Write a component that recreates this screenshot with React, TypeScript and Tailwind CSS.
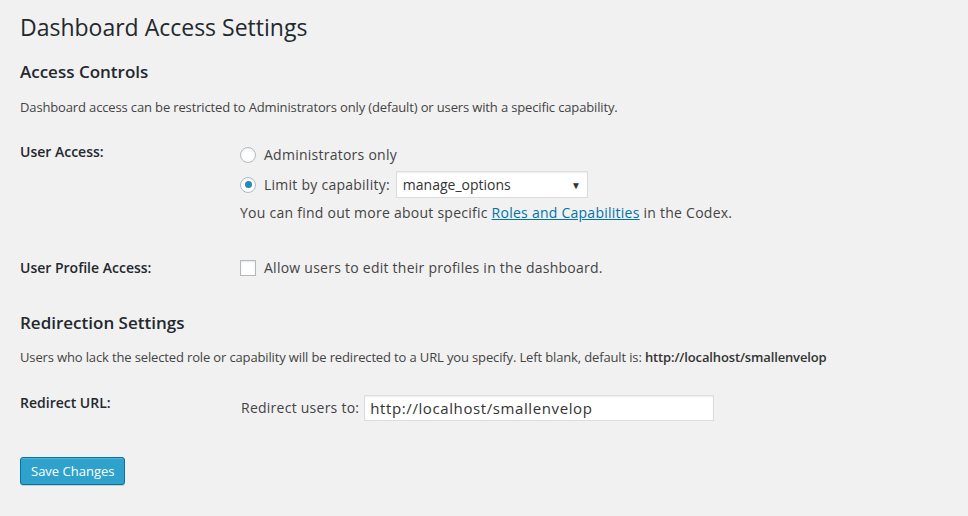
import React from "react";

const font = "font-['Open_Sans','Noto_Sans',sans-serif]";

function Radio({ checked }: { checked?: boolean }) {
  return (
    <span className="inline-flex h-4 w-4 shrink-0 items-center justify-center rounded-full border border-[#b4b9be] bg-white shadow-[inset_0_1px_2px_rgba(0,0,0,0.07)]">
      {checked && <span className="h-[7px] w-[7px] rounded-full bg-[#1e8cbe]" />}
    </span>
  );
}

function Row({ label, contentPad, children }: { label: string; contentPad: string; children: React.ReactNode }) {
  return (
    <div className="flex items-start">
      <div className="w-[220px] shrink-0 text-[14px] leading-[18px] font-[550] text-[#23282d]">{label}</div>
      <div className={`text-[14px] leading-[18px] tracking-[0.25px] text-[#444] ${contentPad}`}>{children}</div>
    </div>
  );
}

export default function App() {
  return (
    <div className={`min-h-[516px] w-full bg-[#f1f1f1] px-5 pt-[13px] pb-8 text-[#444] ${font}`}>
      <h1 className="text-[23px] leading-[29px] font-normal text-[#23282d]">Dashboard Access Settings</h1>

      <h2 className="mt-[19px] text-[17px] leading-[22px] font-semibold text-[#23282d]">Access Controls</h2>
      <p className="mt-[14px] text-[13px] leading-[20px] tracking-[-0.14px]">
        Dashboard access can be restricted to Administrators only (default) or users with a specific capability.
      </p>

      <div className="mt-[26px]">
        <Row label="User Access:" contentPad="pt-[3px]">
          <div className="flex flex-col">
            <label className="flex h-[18px] items-center gap-2">
              <Radio />
              <span>Administrators only</span>
            </label>
            <label className="mt-[7px] flex h-[27px] items-center gap-2">
              <Radio checked />
              <span>Limit by capability:</span>
              <span className="ml-[-2px] flex h-[27px] w-[192px] items-center justify-between border border-[#ddd] bg-white pl-[6px] pr-[6px] tracking-normal text-[#333] shadow-[inset_0_1px_2px_rgba(0,0,0,0.07)]">
                <span>manage_options</span>
                <span className="text-[10px]">▼</span>
              </span>
            </label>
            <p className="mt-[6px]">
              You can find out more about specific{" "}
              <a href="#" className="text-[#0073aa] underline">Roles and Capabilities</a> in the Codex.
            </p>
          </div>
        </Row>
      </div>

      <div className="mt-[37px]">
        <Row label="User Profile Access:" contentPad="">
          <label className="flex h-[18px] items-center gap-2">
            <span className="h-4 w-4 shrink-0 border border-[#b4b9be] bg-white shadow-[inset_0_1px_2px_rgba(0,0,0,0.1)]" />
            <span>Allow users to edit their profiles in the dashboard.</span>
          </label>
        </Row>
      </div>

      <h2 className="mt-[35px] text-[17px] leading-[22px] font-semibold text-[#23282d]">Redirection Settings</h2>
      <p className="mt-[13px] text-[13px] leading-[20px] tracking-[-0.14px]">
        Users who lack the selected role or capability will be redirected to a URL you specify. Left blank, default is:{" "}
        <strong className="font-semibold text-[#333]">http://localhost/smallenvelop</strong>
      </p>

      <div className="mt-[27px]">
        <Row label="Redirect URL:" contentPad="pt-px">
          <label className="flex h-[26px] items-center gap-[5px]">
            <span className="pl-px">Redirect users to:</span>
            <span className="flex h-[26px] w-[350px] items-center border border-[#ddd] bg-white px-[5px] text-[15px] tracking-[0.6px] text-[#333] shadow-[inset_0_1px_2px_rgba(0,0,0,0.07)]">
              http://localhost/smallenvelop
            </span>
          </label>
        </Row>
      </div>

      <div className="mt-[36px]">
        <button className="h-[28px] rounded-[3px] border border-[#0074a2] bg-[#2ea2cc] px-[10px] pb-px text-[13px] leading-[26px] text-white shadow-[inset_0_1px_0_rgba(120,200,230,0.5),0_1px_0_rgba(0,0,0,0.15)]">
          Save Changes
        </button>
      </div>
    </div>
  );
}
